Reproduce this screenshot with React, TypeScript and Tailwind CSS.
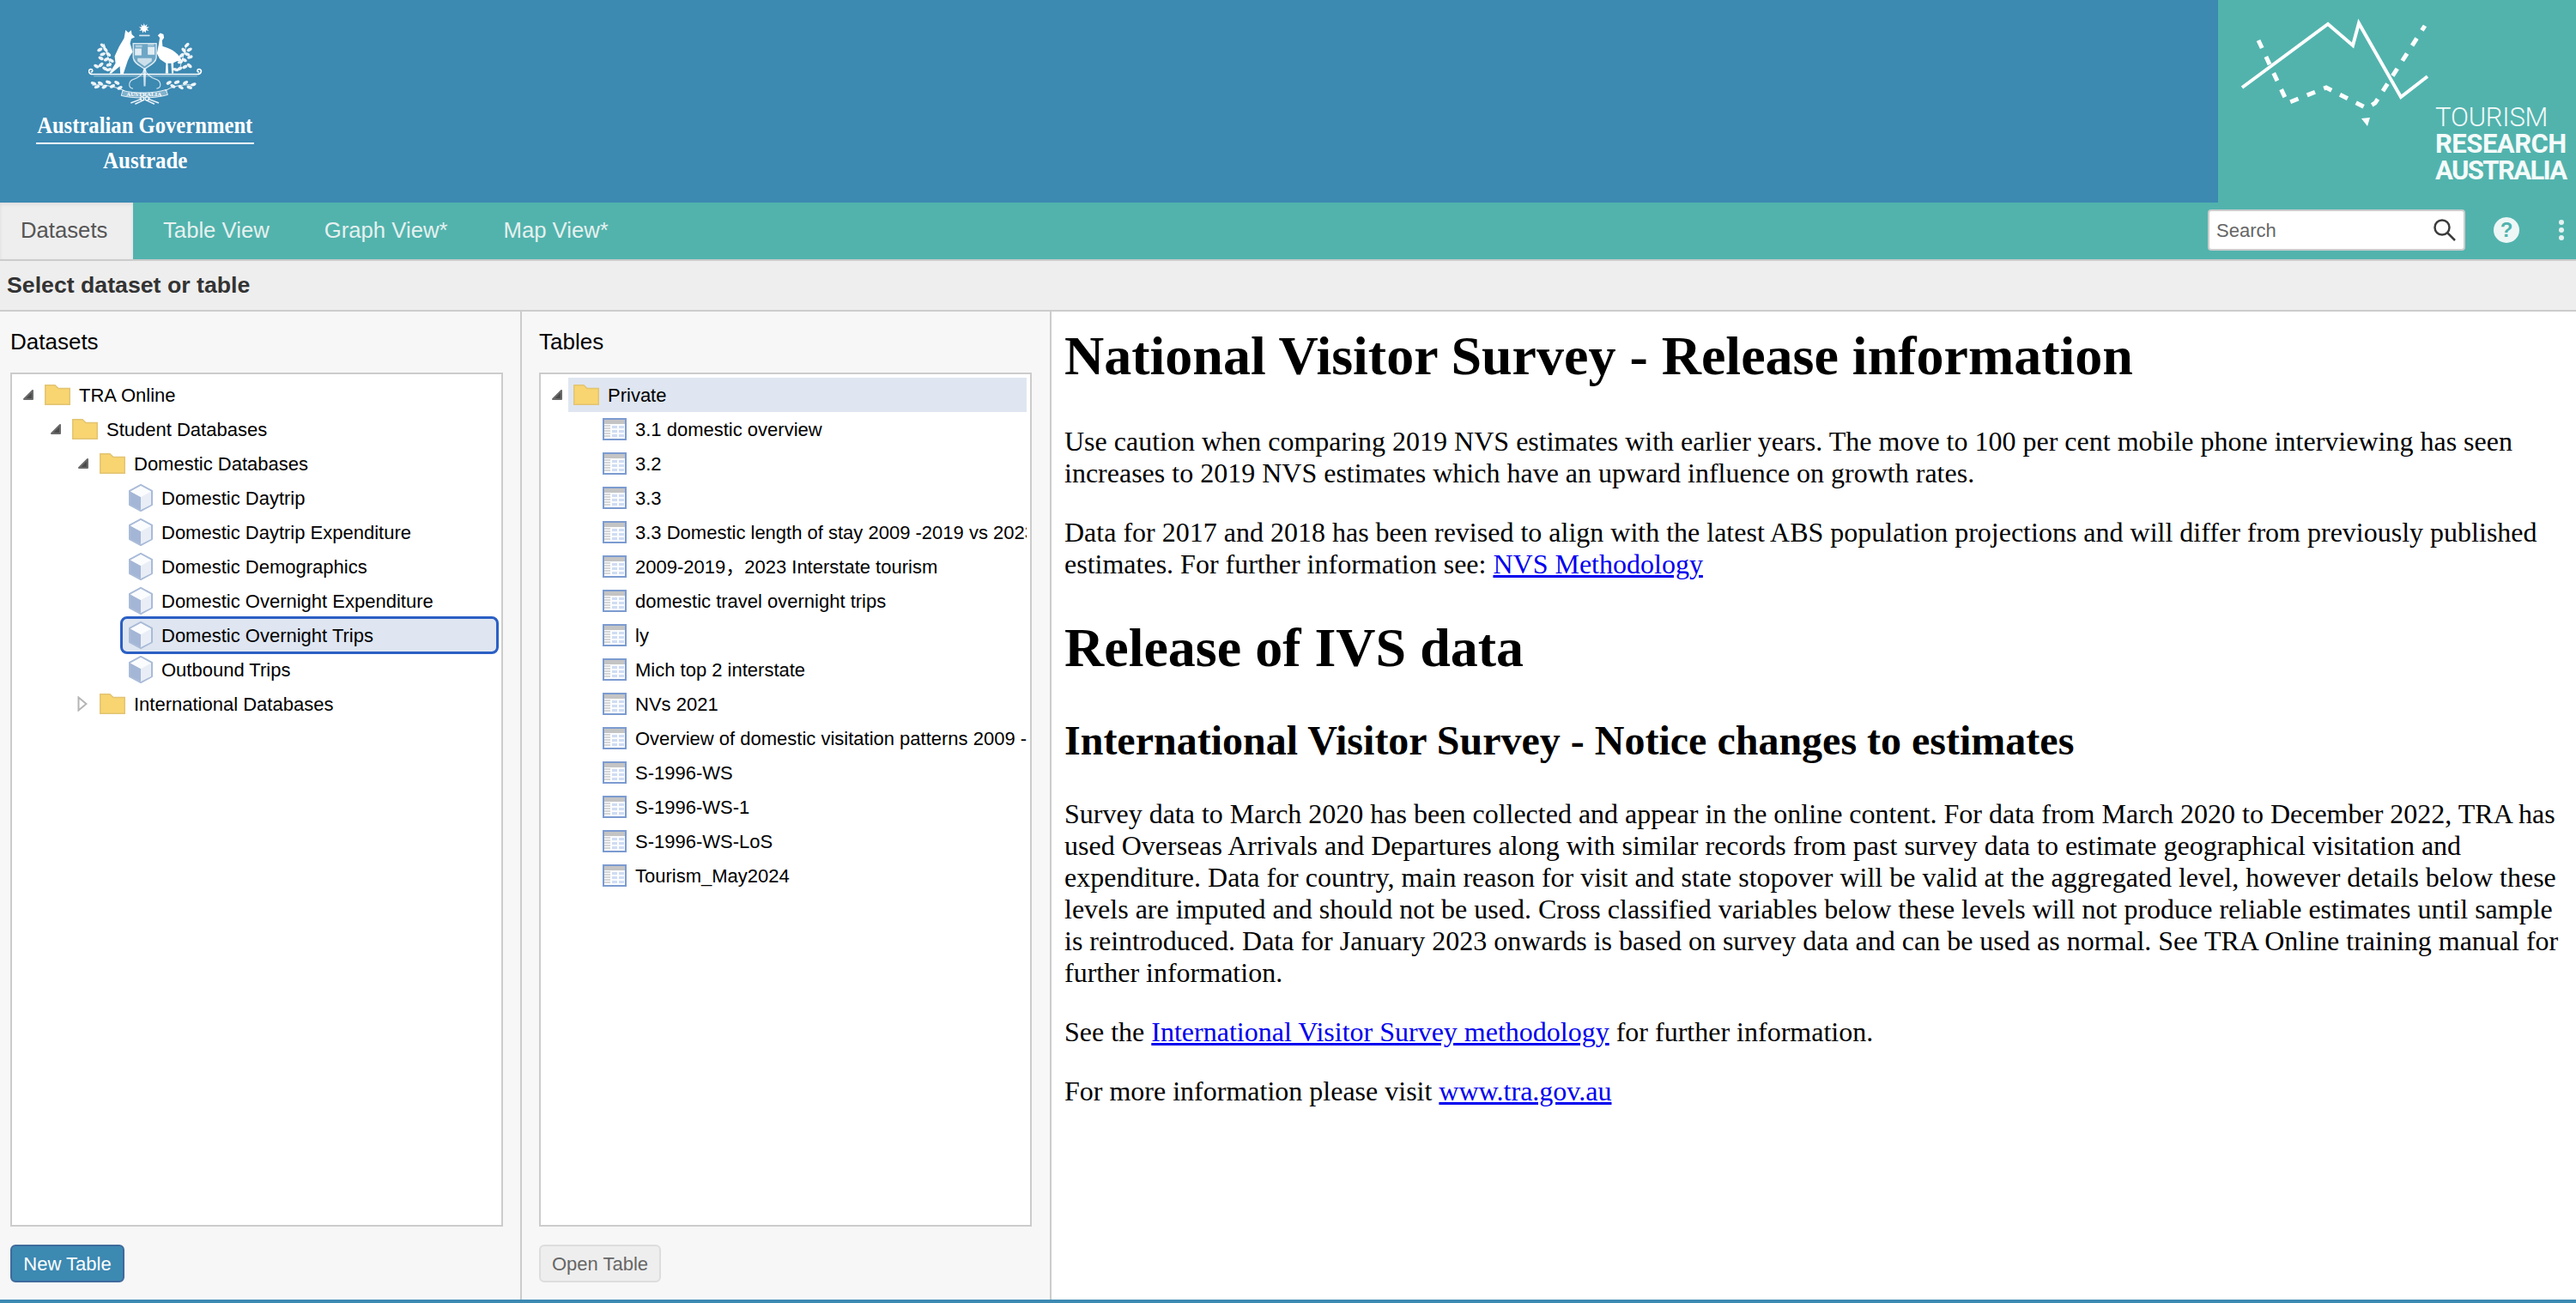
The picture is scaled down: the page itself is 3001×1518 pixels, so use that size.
const sans = "font-['Liberation_Sans','Noto_Sans_CJK_SC',sans-serif]";

function Folder() {
  return (
    <svg width="30" height="24" viewBox="0 0 30 24" className="shrink-0">
      <path d="M0.75 23.25V0.75H12L16 4.5H29.25V23.25Z" fill="#f8d570" stroke="#e2c473" strokeWidth="1.5" />
    </svg>
  );
}

function Cube() {
  return (
    <svg width="30" height="32" viewBox="0 0 30 32" className="shrink-0">
      <path d="M15 1L28 8V24L15 31L2 24V8Z" fill="#f3f5f9" stroke="#a9bbd8" strokeWidth="2" strokeLinejoin="round" />
      <path d="M3 8.5L15 15V30L3 24Z" fill="#a4b6d6" />
      <path d="M15 15L27 8.5V24L15 30Z" fill="#e9eef6" />
      <path d="M3 8.5L15 2L27 8.5L15 15Z" fill="#fbfcfe" />
    </svg>
  );
}

function TableIcon() {
  return (
    <svg width="28" height="26" viewBox="0 0 28 26" className="shrink-0">
      <rect x="1" y="1" width="26" height="24" fill="#fbfcfe" stroke="#7c9bd0" strokeWidth="2" />
      <rect x="2" y="2" width="24" height="5" fill="#c4c4c4" />
      <path d="M2 9H9M2 12H9M2 15H9M2 18H9M2 21H9" stroke="#c9c9c9" strokeWidth="1.5" />
      <path d="M11 9H17V12H11ZM19 9H25V12H19ZM11 14H17V17H11ZM19 14H25V17H19ZM11 19H17V22H11ZM19 19H25V22H19Z" fill="#cfdcf3" />
    </svg>
  );
}

function Arrow({ open }: { open: boolean }) {
  if (open) {
    return (
      <svg width="14" height="14" viewBox="0 0 14 14" className="shrink-0">
        <path d="M12 2V12H2Z" fill="#4a4a4a" stroke="#6a6a6a" strokeWidth="2" strokeLinejoin="round" />
      </svg>
    );
  }
  return (
    <svg width="12" height="18" viewBox="0 0 12 18" className="shrink-0">
      <path d="M1.5 1.5L10.5 9L1.5 16.5Z" fill="#fff" stroke="#b5b5b5" strokeWidth="2" />
    </svg>
  );
}

type Node = { label: string; level: number; open?: boolean; selected?: boolean };

const datasets: Node[] = [
  { label: "TRA Online", level: 0, open: true },
  { label: "Student Databases", level: 1, open: true },
  { label: "Domestic Databases", level: 2, open: true },
  { label: "Domestic Daytrip", level: 3 },
  { label: "Domestic Daytrip Expenditure", level: 3 },
  { label: "Domestic Demographics", level: 3 },
  { label: "Domestic Overnight Expenditure", level: 3 },
  { label: "Domestic Overnight Trips", level: 3, selected: true },
  { label: "Outbound Trips", level: 3 },
  { label: "International Databases", level: 2, open: false },
];

const tables = [
  "3.1 domestic overview",
  "3.2",
  "3.3",
  "3.3 Domestic length of stay 2009 -2019 vs 2023",
  "2009-2019，2023 Interstate tourism",
  "domestic travel overnight trips",
  "ly",
  "Mich top 2 interstate",
  "NVs 2021",
  "Overview of domestic visitation patterns 2009 - 2019 and 2023",
  "S-1996-WS",
  "S-1996-WS-1",
  "S-1996-WS-LoS",
  "Tourism_May2024",
];

function DatasetRow({ node }: { node: Node }) {
  const indent = [12, 44, 76, 0][node.level];
  if (node.level === 3) {
    return (
      <div className="h-10 flex items-center relative pl-[135px] whitespace-nowrap text-[22px] text-black">
        {node.selected && (
          <div className="absolute left-[126px] top-[-2px] w-[441px] h-11 rounded-lg border-[3px] border-[#2b5fc4] bg-[#dfe6f1]" />
        )}
        <span className="relative flex items-center gap-[9px]">
          <Cube />
          {node.label}
        </span>
      </div>
    );
  }
  return (
    <div className="h-10 flex items-center whitespace-nowrap text-[22px] text-black" style={{ paddingLeft: indent }}>
      <span className="w-[26px] flex"><Arrow open={!!node.open} /></span>
      <span className="flex items-center gap-[10px]">
        <Folder />
        {node.label}
      </span>
    </div>
  );
}

const sprigs: [number, number, number][] = [
  [90, 98, 40], [80, 112, -30], [100, 112, 50], [90, 128, -20], [110, 128, 40], [84, 142, 30], [103, 146, -30], [120, 150, 30], [112, 165, -20],
  [385, 96, -40], [394, 112, -30], [374, 114, 50], [386, 128, 20], [366, 132, -40], [396, 138, -20], [376, 148, 30], [362, 155, -20],
  [68, 170, 30], [84, 165, -40], [98, 178, 30], [112, 182, -20], [378, 172, -30], [394, 168, 40], [360, 178, -30], [346, 182, 20],
  [58, 230, 20], [70, 242, -20], [82, 230, 30], [96, 242, -30], [110, 226, 20], [124, 240, -30], [140, 228, 30], [150, 246, -30],
  [408, 234, -20], [394, 244, 20], [380, 228, -30], [364, 244, 30], [350, 226, -20], [336, 240, 30], [322, 228, -30],
];

function Crest() {
  return (
    <svg width="133" height="97" viewBox="40 20 400 290" className="shrink-0">
      <g fill="#fff">
        <path d="M235 19L238 29L246 23L243 33L253 33L245 39L252 46L242 44L240 54L235 46L230 54L228 44L218 46L225 39L217 33L227 33L224 23L232 29Z" />
        <rect x="218" y="60" width="37" height="5" fillOpacity="0.8" />
        <path d="M170 43L180 52L190 44L192 58L203 68L190 74L186 90L195 120L185 135L178 150L162 198L152 198L150 170L120 195L113 195L135 160L132 135L148 100L165 72Z" />
        <path d="M283 62L292 54L303 58L305 70L298 80L300 100C320 105 350 115 368 150L350 152L338 158L338 195L332 195L330 160L318 160L320 195L310 195L312 160L290 145L280 125L286 95L290 70Z" />
        <path d="M197 90H278V140C276 160 252 168 237 180C222 168 199 160 197 140Z" fill="#fff" fillOpacity="0.25" stroke="#fff" strokeOpacity="0.8" strokeWidth="4" />
        <path d="M203 108H226V132H203ZM248 102H272V130H248Z" fillOpacity="0.8" />
        <path d="M212 142H262V152L237 170L212 152Z" fillOpacity="0.65" />
        <path d="M205 96H228V104H205ZM248 92H270V98H248Z" fillOpacity="0.45" />
        {sprigs.map(([x, y, r]) => (
          <ellipse key={`${x}-${y}`} cx={x} cy={y} rx="10" ry="5.5" transform={`rotate(${r} ${x} ${y})`} fillOpacity="0.9" />
        ))}
        <path d="M232 180H242L240 240H234Z" fillOpacity="0.75" />
      </g>
      <g fill="none" stroke="#fff" strokeLinecap="round">
        <path d="M95 92L118 170M385 92L362 170" strokeWidth="3" strokeOpacity="0.8" />
        <path d="M55 198H422C436 198 440 182 428 180C420 180 420 190 426 190M55 198C42 198 36 184 48 180C56 180 56 190 50 190" strokeWidth="5" />
        <path d="M60 205H420" strokeWidth="2.5" strokeOpacity="0.55" />
        <path d="M55 236C90 232 120 236 165 255M412 236C370 232 340 236 310 255" strokeWidth="3.5" strokeOpacity="0.8" />
        <path d="M200 215C180 220 178 245 195 248M275 215C295 220 298 245 280 248M237 178C230 200 215 210 200 215M237 178C244 200 260 210 275 215" strokeWidth="3.5" strokeOpacity="0.75" />
        <path d="M190 298L225 285M285 298L250 285M205 302L235 288M270 302L240 288" strokeWidth="4.5" strokeOpacity="0.9" />
        <circle cx="228" cy="283" r="7" strokeWidth="3" />
        <circle cx="246" cy="283" r="7" strokeWidth="3" />
      </g>
      <path d="M160 255C200 266 270 266 312 252L318 270C270 284 200 284 155 273Z" fill="#fff" fillOpacity="0.35" stroke="#fff" strokeWidth="2.5" />
      <text x="235" y="274" textAnchor="middle" fontSize="21" fontFamily="Liberation Serif, serif" fill="#fff">AUSTRALIA</text>
    </svg>
  );
}

function TraLogo() {
  return (
    <svg width="230" height="130" viewBox="0 0 230 130" className="absolute left-[26px] top-[20px]">
      <path d="M2 82L102 8L131 33L138 7L187 93L218 69" fill="none" stroke="#fff" strokeWidth="4" />
      <path d="M21 27L55 100L100 82L147 106L157 100L215 10" fill="none" stroke="#fff" strokeWidth="5" strokeDasharray="10 11" />
      <path d="M141 118L151 117L148 127Z" fill="#fff" />
    </svg>
  );
}

export default function App() {
  return (
    <div className={`${sans} w-[3001px] h-[1518px] flex flex-col overflow-hidden bg-white`}>
      <header className="h-[236px] flex bg-[#3c89b2] shrink-0">
        <div className="w-[338px] flex flex-col items-center pt-[27px] text-white font-['Liberation_Serif',serif] font-bold">
          <Crest />
          <div className="text-[28px] leading-[28px] mt-[8px] whitespace-nowrap scale-x-[0.88]">Australian Government</div>
          <div className="w-[254px] h-[2px] bg-white mt-[6px]" />
          <div className="text-[28px] leading-[28px] mt-[5px] whitespace-nowrap scale-x-[0.89]">Austrade</div>
        </div>
        <div className="flex-1" />
        <div className="w-[417px] bg-[#52b3ad] relative text-[#f4fbfa] font-['Roboto',sans-serif]">
          <TraLogo />
          <div className="absolute left-[253px] top-[121px] flex flex-col">
            <span className="text-[31px] leading-[31px] font-light whitespace-nowrap tracking-[-0.2px]">TOURISM</span>
            <span className="text-[31px] leading-[31px] font-bold whitespace-nowrap tracking-[-0.5px]">RESEARCH</span>
            <span className="text-[31px] leading-[31px] font-bold whitespace-nowrap tracking-[-1.6px]">AUSTRALIA</span>
          </div>
        </div>
      </header>

      <nav className="h-[68px] shrink-0 flex items-stretch bg-[#52b3ad] border-b-2 border-[#cccccc] text-[25.7px] text-[#e6f1ef]">
        <div className="w-[155px] bg-[#eeeeee] text-[#555] flex items-center pl-[24px] pb-[2px] shadow-[inset_0_2px_4px_rgba(0,0,0,0.08)]">Datasets</div>
        <div className="flex items-center ml-[35px] pb-[2px]">Table View</div>
        <div className="flex items-center ml-[64px] pb-[2px]">Graph View*</div>
        <div className="flex items-center ml-[65px] pb-[2px]">Map View*</div>
        <div className="flex-1" />
        <div className="w-[300px] h-12 self-center rounded border-2 border-[#cccccc] bg-white flex items-center pl-[8px] pr-[8px] text-[22px] text-[#666] mb-[2px]">
          <span className="flex-1">Search</span>
          <svg width="28" height="28" viewBox="0 0 28 28">
            <circle cx="11" cy="11" r="8.5" fill="none" stroke="#3c3c3c" strokeWidth="2.5" />
            <path d="M17.5 17.5L26 26" stroke="#3c3c3c" strokeWidth="2.5" />
          </svg>
        </div>
        <div className="w-[30px] h-[30px] ml-[33px] self-center rounded-full bg-[#eef7f6] text-[#52b3ad] font-bold text-[24px] flex items-center justify-center mb-[2px]">?</div>
        <div className="ml-[46px] mr-[14px] self-center flex flex-col gap-[3px] mb-[2px]">
          <span className="w-[6px] h-[6px] rounded-full bg-[#e6f3f1]" />
          <span className="w-[6px] h-[6px] rounded-full bg-[#e6f3f1]" />
          <span className="w-[6px] h-[6px] rounded-full bg-[#e6f3f1]" />
        </div>
      </nav>

      <div className="h-[59px] shrink-0 bg-[#eeeeee] border-b-2 border-[#cccccc] flex items-center pl-[8px] text-[26.7px] font-bold text-[#333]">
        Select dataset or table
      </div>

      <main className="flex-1 min-h-0 flex">
        <section className="w-[608px] shrink-0 bg-[#f7f7f7] border-r-2 border-[#cccccc] flex flex-col pl-[12px] pr-[20px]">
          <h2 className="text-[26px] leading-[30px] text-black mt-[20px]">Datasets</h2>
          <div className="mt-[21px] h-[995px] border-2 border-[#cccccc] bg-white pt-[4px] overflow-hidden">
            {datasets.map((n) => (
              <DatasetRow key={n.label} node={n} />
            ))}
          </div>
          <button className="mt-[21px] self-start w-[133px] h-11 rounded-md border-2 border-[#3f6a9c] bg-[#3c89b2] text-white text-[22px]">New Table</button>
        </section>

        <section className="w-[617px] shrink-0 bg-[#f7f7f7] border-r-2 border-[#cccccc] flex flex-col pl-[20px] pr-[21px]">
          <h2 className="text-[26px] leading-[30px] text-black mt-[20px]">Tables</h2>
          <div className="mt-[21px] h-[995px] border-2 border-[#cccccc] bg-white pt-[4px] overflow-hidden pr-[4px]">
            <div className="h-10 flex items-center ml-[32px] bg-[#dfe6f1] relative text-[22px] text-black">
              <span className="absolute left-[-20px]"><Arrow open /></span>
              <span className="flex items-center gap-[10px] pl-[6px]">
                <Folder />
                Private
              </span>
            </div>
            {tables.map((t) => (
              <div key={t} className="h-10 flex items-center gap-[10px] pl-[72px] whitespace-nowrap text-[22px] text-black overflow-hidden">
                <TableIcon />
                {t}
              </div>
            ))}
          </div>
          <button className="mt-[21px] self-start w-[142px] h-11 rounded-md border-2 border-[#dddddd] bg-[#eeeeee] text-[#666] text-[22px]">Open Table</button>
        </section>

        <article className="flex-1 min-w-0 pl-[15px] pr-[16px] pt-[15px] font-['Liberation_Serif',serif] text-[32px] leading-[37px] text-black">
          <h1 className="text-[64px] leading-[74px] font-bold mb-[44px]">National Visitor Survey - Release information</h1>
          <p className="mb-[32px]">Use caution when comparing 2019 NVS estimates with earlier years. The move to 100 per cent mobile phone interviewing has seen increases to 2019 NVS estimates which have an upward influence on growth rates.</p>
          <p>Data for 2017 and 2018 has been revised to align with the latest ABS population projections and will differ from previously published estimates. For further information see: <a className="text-[#0000ee] underline">NVS Methodology</a></p>
          <h1 className="text-[64px] leading-[74px] font-bold mt-[42px] mb-[43px]">Release of IVS data</h1>
          <h2 className="text-[48px] leading-[55px] font-bold mb-[40px]">International Visitor Survey - Notice changes to estimates</h2>
          <p className="mb-[32px]">Survey data to March 2020 has been collected and appear in the online content. For data from March 2020 to December 2022, TRA has used Overseas Arrivals and Departures along with similar records from past survey data to estimate geographical visitation and expenditure. Data for country, main reason for visit and state stopover will be valid at the aggregated level, however details below these levels are imputed and should not be used. Cross classified variables below these levels will not produce reliable estimates until sample is reintroduced. Data for January 2023 onwards is based on survey data and can be used as normal. See TRA Online training manual for further information.</p>
          <p className="mb-[32px]">See the <a className="text-[#0000ee] underline">International Visitor Survey methodology</a> for further information.</p>
          <p>For more information please visit <a className="text-[#0000ee] underline">www.tra.gov.au</a></p>
        </article>
      </main>

      <div className="h-1 shrink-0 bg-[#3c89b2]" />
    </div>
  );
}
